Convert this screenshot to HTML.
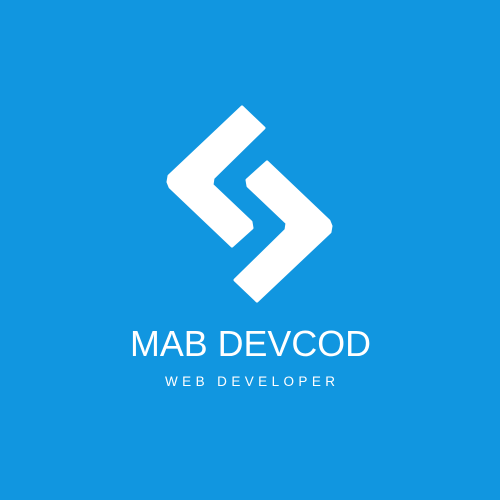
<!DOCTYPE html>
<html><head><meta charset="utf-8"><style>
html,body{margin:0;padding:0;background:#1196e0;}
svg{display:block}
</style></head><body>
<svg width="500" height="500" viewBox="0 0 500 500" xmlns="http://www.w3.org/2000/svg">
<rect width="500" height="500" fill="#1196e0"/>
<g fill="#fff" stroke="#fff" stroke-width="3" stroke-linejoin="round">
<polygon points="242,107 264,128 213,178 212,185 251,222 252,228 232,246 170,187 168,182 169,176"/>
<polygon points="257,301 235,280 286,230 287,223 248,186 247,180 267,162 329,221 331,226 330,232"/>
</g>
<text x="130" y="356" textLength="241" lengthAdjust="spacingAndGlyphs" font-family="Liberation Sans, sans-serif" font-size="36" fill="#fff">MAB DEVCOD</text>
<text x="165" y="386" textLength="170" lengthAdjust="spacing" font-family="Liberation Sans, sans-serif" font-size="13.5" fill="#fff">WEB DEVELOPER</text>
</svg>
</body></html>
